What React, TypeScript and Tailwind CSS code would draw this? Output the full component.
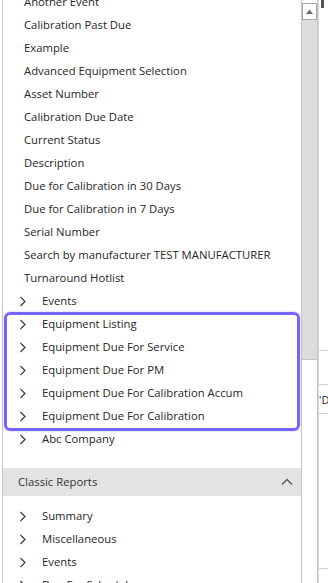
import React from "react";

const font = { fontFamily: '"Open Sans", "Noto Sans", "Liberation Sans", sans-serif' };

function Chevron() {
  return (
    <svg width="8" height="11" viewBox="0 0 8 11" className="shrink-0">
      <polyline points="1.5,1 6,5.5 1.5,10" fill="none" stroke="#3a3a3a" strokeWidth="1.2" />
    </svg>
  );
}

function Flat({ label }: { label: string }) {
  return (
    <div className="h-[23px] shrink-0 flex items-center pl-[21px] text-[11.3px] text-[#262626] whitespace-nowrap">
      {label}
    </div>
  );
}

function Tree({ label }: { label: string }) {
  return (
    <div className="h-[23px] shrink-0 flex items-center pl-[16px] text-[11.3px] text-[#262626] whitespace-nowrap">
      <Chevron />
      <span className="ml-[15px]">{label}</span>
    </div>
  );
}

export default function App() {
  const flat = [
    "Another Event",
    "Calibration Past Due",
    "Example",
    "Advanced Equipment Selection",
    "Asset Number",
    "Calibration Due Date",
    "Current Status",
    "Description",
    "Due for Calibration in 30 Days",
    "Due for Calibration in 7 Days",
    "Serial Number",
    "Search by manufacturer TEST MANUFACTURER",
    "Turnaround Hotlist",
  ];
  const boxed = [
    "Equipment Listing",
    "Equipment Due For Service",
    "Equipment Due For PM",
    "Equipment Due For Calibration Accum",
    "Equipment Due For Calibration",
  ];
  return (
    <div className="w-[328px] h-[583px] overflow-hidden bg-white flex relative" style={font}>
      <div className="w-[2px] shrink-0 bg-white" />
      <div className="w-[299px] shrink-0 border-l border-[#c8c8c8] flex flex-col">
        <div className="mt-[-9px] shrink-0 flex flex-col">
          {flat.map((l) => (
            <Flat key={l} label={l} />
          ))}
          <Tree label="Events" />
          <div className="relative shrink-0 flex flex-col">
            {boxed.map((l) => (
              <Tree key={l} label={l} />
            ))}
            <div className="absolute left-[1px] right-[1px] top-[-1px] bottom-[-3px] border-[3px] border-[#7666f5] rounded-[6px] shadow-[0_0_2px_rgba(118,102,245,0.5)]" />
          </div>
          <Tree label="Abc Company" />
        </div>
        <div className="mt-[17px] h-[28px] shrink-0 bg-[#e3e3e3] flex items-center justify-between pl-[15px] pr-[8px] text-[11.3px] text-[#333]">
          <span>Classic Reports</span>
          <svg width="12" height="8" viewBox="0 0 12 8">
            <polyline points="1,6.5 6,1.5 11,6.5" fill="none" stroke="#555" strokeWidth="1.3" />
          </svg>
        </div>
        <div className="mt-[9px] shrink-0 flex flex-col">
          <Tree label="Summary" />
          <Tree label="Miscellaneous" />
          <Tree label="Events" />
          <Tree label="Due For Schedule" />
        </div>
      </div>
      <div className="w-[17px] shrink-0 flex flex-col border-l border-[#c4c4c4] border-r border-r-[#c4c4c4]">
        <div className="h-[20px] shrink-0 flex items-start">
          <div className="mt-[3px] w-[15px] h-[17px] bg-white border border-[#a8a8a8] flex items-center justify-center">
            <svg width="7" height="5" viewBox="0 0 7 5">
              <polygon points="0,5 3.5,0.5 7,5" fill="#6a6a6a" />
            </svg>
          </div>
        </div>
        <div className="h-[339px] shrink-0 bg-[#dcdcdc]" />
        <div className="flex-1 bg-white border-t border-[#c4c4c4]" />
      </div>
      <div className="flex-1 flex flex-col bg-white border-l border-[#d8d8d8]">
        <div className="h-[8px] shrink-0 w-[3px] ml-[2px] bg-[#555]" />
        <div className="h-[342px] shrink-0" />
        <div className="h-px shrink-0 bg-[#cfcfcf]" />
        <div className="h-[33px] shrink-0" />
        <div className="h-px shrink-0 bg-[#cfcfcf]" />
        <div className="h-[28px] shrink-0 flex items-center text-[11px] text-[#222] leading-none">'D</div>
        <div className="h-px shrink-0 bg-[#cfcfcf]" />
        <div className="h-[154px] shrink-0" />
        <div className="h-px shrink-0 bg-[#cfcfcf]" />
      </div>
    </div>
  );
}
